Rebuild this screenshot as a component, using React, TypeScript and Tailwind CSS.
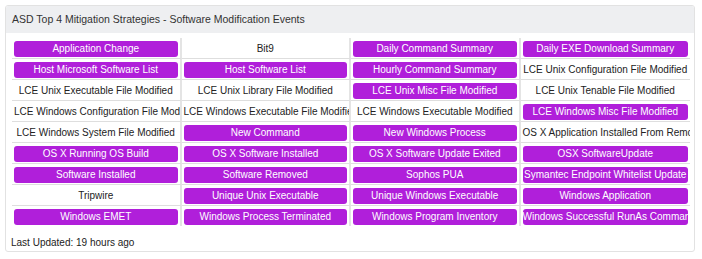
import React from 'react';

type Cell = { label: string; hit: boolean };

const cells: Cell[] = [
    { label: 'Application Change', hit: true },
    { label: 'Bit9', hit: false },
    { label: 'Daily Command Summary', hit: true },
    { label: 'Daily EXE Download Summary', hit: true },
    { label: 'Host Microsoft Software List', hit: true },
    { label: 'Host Software List', hit: true },
    { label: 'Hourly Command Summary', hit: true },
    { label: 'LCE Unix Configuration File Modified', hit: false },
    { label: 'LCE Unix Executable File Modified', hit: false },
    { label: 'LCE Unix Library File Modified', hit: false },
    { label: 'LCE Unix Misc File Modified', hit: true },
    { label: 'LCE Unix Tenable File Modified', hit: false },
    { label: 'LCE Windows Configuration File Modified', hit: false },
    { label: 'LCE Windows Executable File Modified', hit: false },
    { label: 'LCE Windows Executable Modified', hit: false },
    { label: 'LCE Windows Misc File Modified', hit: true },
    { label: 'LCE Windows System File Modified', hit: false },
    { label: 'New Command', hit: true },
    { label: 'New Windows Process', hit: true },
    { label: 'OS X Application Installed From Remote Media', hit: false },
    { label: 'OS X Running OS Build', hit: true },
    { label: 'OS X Software Installed', hit: true },
    { label: 'OS X Software Update Exited', hit: true },
    { label: 'OSX SoftwareUpdate', hit: true },
    { label: 'Software Installed', hit: true },
    { label: 'Software Removed', hit: true },
    { label: 'Sophos PUA', hit: true },
    { label: 'Symantec Endpoint Whitelist Update', hit: true },
    { label: 'Tripwire', hit: false },
    { label: 'Unique Unix Executable', hit: true },
    { label: 'Unique Windows Executable', hit: true },
    { label: 'Windows Application', hit: true },
    { label: 'Windows EMET', hit: true },
    { label: 'Windows Process Terminated', hit: true },
    { label: 'Windows Program Inventory', hit: true },
    { label: 'Windows Successful RunAs Command', hit: true },
];

const rowCount = Math.ceil(cells.length / 4);

export default function App() {
    return (
        <div className="bg-white p-[5px] font-['Liberation_Sans',Arial,sans-serif]">
            <div className="w-[690px] h-[247px] border border-[#e2e2e2] rounded-[3px] bg-white overflow-hidden">
                <div className="h-[27px] bg-[#eeeff1] pl-[6px] flex items-center text-[10.5px] text-[#333]">
                    ASD Top 4 Mitigation Strategies - Software Modification Events
                </div>
                <div className="px-[6px] pt-[5px]">
                    <div className="w-[678px] grid grid-cols-4">
                        {cells.map((cell, i) => {
                            const col = i % 4;
                            const row = Math.floor(i / 4);
                            return (
                                <div
                                    key={i}
                                    className={
                                        'overflow-hidden px-[2px] pt-[3px] pb-[1px] ' +
                                        (col < 3 ? 'border-r-2 border-r-[#e4e4e4] ' : '') +
                                        (row < rowCount - 1 ? 'border-b border-b-[#dedede]' : '')
                                    }
                                >
                                    {cell.hit ? (
                                        <div className="h-[16px] leading-[16px] rounded-[3px] bg-[#b01fda] text-white text-[10px] text-center whitespace-nowrap overflow-hidden">
                                            {cell.label}
                                        </div>
                                    ) : (
                                        <div className="h-[16px] leading-[16px] text-[#222] text-[10px] text-center whitespace-nowrap">
                                            {cell.label}
                                        </div>
                                    )}
                                </div>
                            );
                        })}
                    </div>
                </div>
                <div className="pl-[5px] pt-[11px] text-[10px] leading-[12px] text-[#222]">Last Updated: 19 hours ago</div>
            </div>
        </div>
    );
}
